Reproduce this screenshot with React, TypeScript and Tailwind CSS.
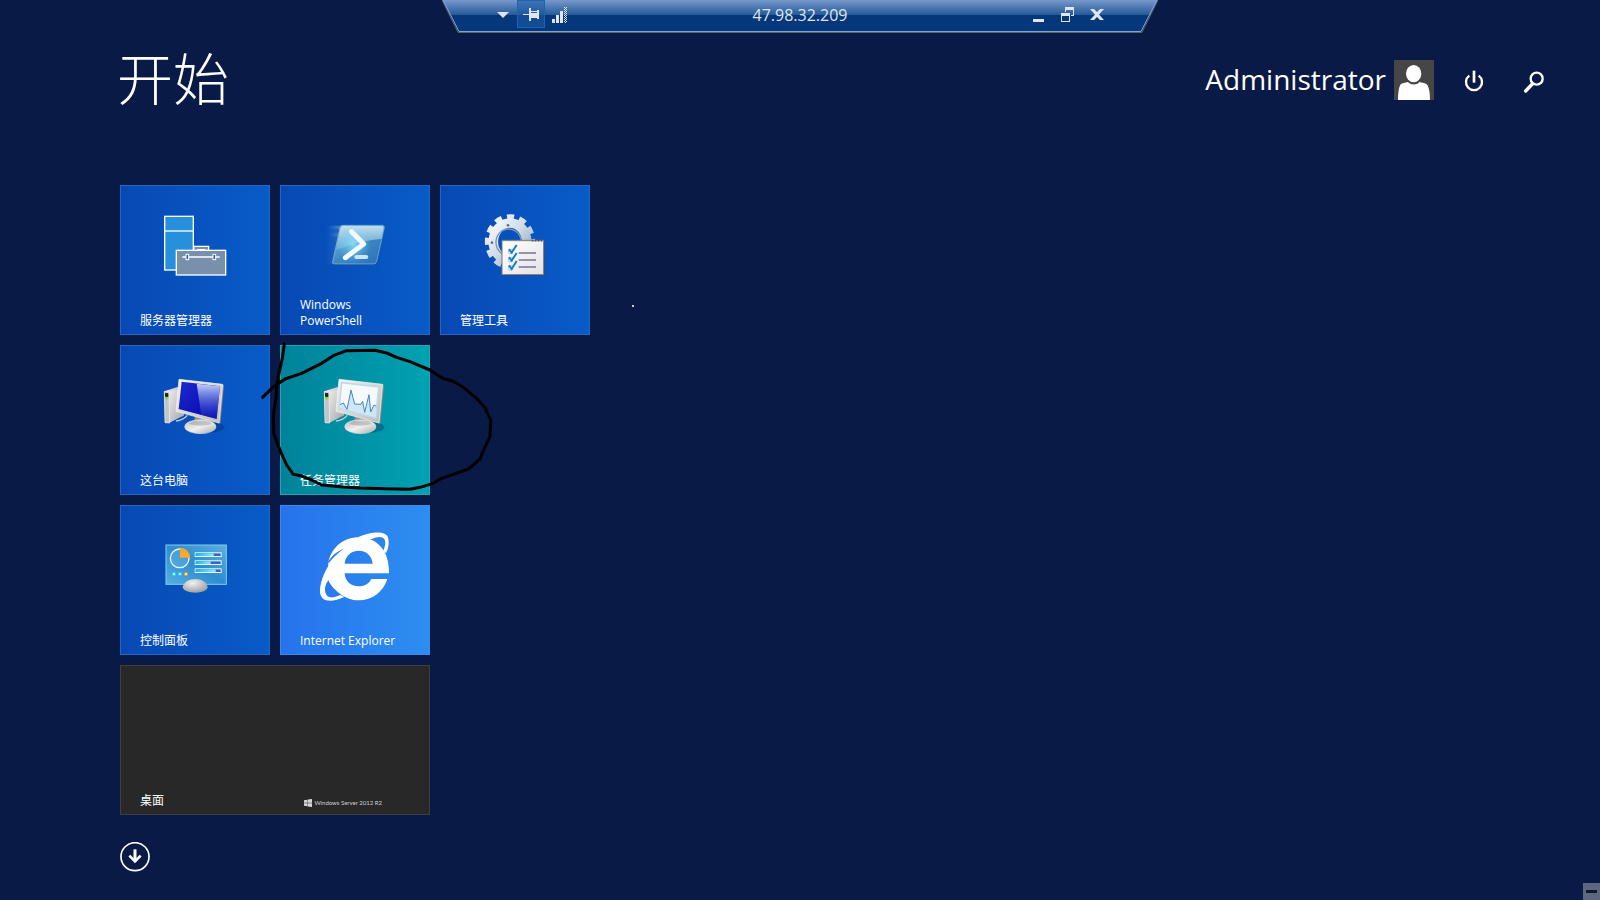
import type { ReactNode } from "react";
import clsx from "clsx";

type TileProps = {
    label: ReactNode;
    color?: string;
    className?: string;
    children?: ReactNode;
};

const BLUE = "bg-linear-to-r from-[#0848b4] to-[#085cc8] outline-[#2466c4]";
const TEAL = "bg-linear-to-r from-[#008299] to-[#00a2b2] outline-[#1fa5b5]";
const SKY = "bg-linear-to-r from-[#2672ec] to-[#2e8ef0] outline-[#3f88ee]";

function Tile({ label, color = BLUE, className, children }: TileProps) {
    return (
        <button
            type="button"
            className={clsx(
                "flex flex-col items-center justify-between pt-5 pb-1.5 text-left text-xs leading-4 outline -outline-offset-1",
                color,
                className
            )}
        >
            {children}
            <span className="w-full px-5">{label}</span>
        </button>
    );
}

function ServerManagerIcon() {
    return (
        <svg viewBox="135 75 240 240" className="size-20" aria-hidden="true">
            <g stroke="#fff" strokeWidth="4">
                <rect x="164" y="109" width="86" height="161" fill="#2790dc" />
                <path d="M164 153H250" />
                <path d="M251 211V199H296V211" fill="#7890ab" />
                <rect x="199" y="211" width="148" height="74" fill="#7890ab" />
                <path d="M217 231H329" />
                <rect x="228" y="223" width="8" height="16" fill="#1d62b4" strokeWidth="3" />
                <rect x="309" y="223" width="8" height="16" fill="#1d62b4" strokeWidth="3" />
            </g>
            <path d="M261 207H286V212H261z" fill="#fff" />
        </svg>
    );
}

function PowerShellIcon() {
    return (
        <svg viewBox="120 75 240 240" className="size-20" aria-hidden="true">
            <defs>
                <linearGradient id="ps-face" x1="0" y1="0" x2="1" y2="1">
                    <stop offset="0" stopColor="#8cc3dc" />
                    <stop offset="0.5" stopColor="#3c8ac4" />
                    <stop offset="1" stopColor="#2a6fb6" />
                </linearGradient>
                <linearGradient id="ps-gloss" x1="0" y1="0" x2="0" y2="1">
                    <stop offset="0" stopColor="#c4e2ee" stopOpacity="0.95" />
                    <stop offset="1" stopColor="#7db9dc" stopOpacity="0.55" />
                </linearGradient>
                <radialGradient id="ps-glow">
                    <stop offset="0" stopColor="#8feaff" stopOpacity="0.8" />
                    <stop offset="1" stopColor="#6fc8f0" stopOpacity="0" />
                </radialGradient>
                <linearGradient id="ps-trail" x1="0" y1="0" x2="1" y2="0">
                    <stop offset="0" stopColor="#7db4e0" stopOpacity="0" />
                    <stop offset="1" stopColor="#8cc0e4" stopOpacity="0.7" />
                </linearGradient>
            </defs>
            <path d="M154 136H202L176 252H150z" fill="url(#ps-trail)" opacity="0.3" />
            <path d="M160 138H202L199 148H160zM160 158H196L193 170H160z" fill="url(#ps-trail)" opacity="0.5" />
            <path d="M203 139H325Q331 139 329 146L307 248Q305 255 298 255H180Q173 255 175 248L196 145Q198 139 203 139z" fill="#073b86" opacity="0.5" />
            <path d="M204 136H322Q329 136 328 143L305 245Q303 252 296 252H178Q171 252 173 245L195 143Q197 136 204 136z" fill="url(#ps-face)" stroke="#8dc0e0" strokeWidth="2" />
            <path d="M205 138H321Q327 138 326 144L319 177C275 180 235 190 183 210L197 144Q199 138 205 138z" fill="url(#ps-gloss)" />
            <ellipse cx="236" cy="194" rx="52" ry="54" fill="url(#ps-glow)" />
            <path d="M230 155L266 192L211 233" fill="none" stroke="#f2faff" strokeWidth="15" strokeLinecap="round" strokeLinejoin="round" />
            <rect x="238" y="225" width="42" height="12" rx="6" fill="#c9e6f6" />
        </svg>
    );
}

function AdminToolsIcon() {
    return (
        <svg viewBox="120 75 240 240" className="size-20" aria-hidden="true">
            <defs>
                <linearGradient id="gear" x1="0" y1="0" x2="1" y2="1">
                    <stop offset="0" stopColor="#f4f7fa" />
                    <stop offset="0.5" stopColor="#cddae6" />
                    <stop offset="1" stopColor="#8fa3ba" />
                </linearGradient>
                <linearGradient id="paper" x1="0" y1="0" x2="1" y2="1">
                    <stop offset="0" stopColor="#ffffff" />
                    <stop offset="1" stopColor="#e2e2e4" />
                </linearGradient>
            </defs>
            <g fill="none" stroke="url(#gear)">
                <ellipse cx="225" cy="185" rx="67" ry="74" strokeWidth="17" pathLength="120" strokeDasharray="5.8 4.2" strokeDashoffset="2.9" />
                <ellipse cx="225" cy="185" rx="50" ry="56" strokeWidth="29" />
            </g>
            <ellipse cx="221" cy="187" rx="38" ry="40" fill="none" stroke="#7d94b0" strokeWidth="4" />
            <circle cx="219" cy="136" r="4" fill="#5f7080" />
            <circle cx="171" cy="188" r="4" fill="#5f7080" />
            <path d="M206 186H329V287H206z" fill="#333" opacity="0.5" />
            <path d="M201 181H326V284H201z" fill="url(#paper)" stroke="#77797c" strokeWidth="3" />
            <path d="M203 182H324" stroke="#85888c" strokeWidth="3" />
            <path d="M290 182H322" stroke="#55585c" strokeWidth="5" strokeDasharray="5 4" />
            <g stroke="#7b6f9c" strokeWidth="4">
                <path d="M251 219H303M251 240H303M251 261H303" />
            </g>
            <g fill="none" stroke="#a5b4c6" strokeWidth="2">
                <path d="M221 208H232V221H221zM221 232H232V245H221zM221 257H232V270H221z" />
            </g>
            <g fill="none" stroke="#147fc0" strokeWidth="6">
                <path d="M222 208L230 218L245 195M222 232L230 242L245 219M222 256L230 267L245 243" />
            </g>
        </svg>
    );
}

function ComputerIcon({ id, children }: { id: string; children: ReactNode }) {
    return (
        <svg viewBox="135 75 240 240" className="size-20" aria-hidden="true">
            <defs>
                <linearGradient id={`${id}-case`} x1="0" y1="0" x2="1" y2="0.3">
                    <stop offset="0" stopColor="#f7f7f7" />
                    <stop offset="1" stopColor="#a9abae" />
                </linearGradient>
                <linearGradient id={`${id}-side`} x1="0" y1="0" x2="1" y2="1">
                    <stop offset="0" stopColor="#ececec" />
                    <stop offset="1" stopColor="#a4a6a9" />
                </linearGradient>
                <linearGradient id={`${id}-frame`} x1="0" y1="0" x2="1" y2="1">
                    <stop offset="0" stopColor="#f5f4ef" />
                    <stop offset="1" stopColor="#bdbcb8" />
                </linearGradient>
                <linearGradient id={`${id}-base`} x1="0" y1="0" x2="1" y2="1">
                    <stop offset="0" stopColor="#bfc0c2" />
                    <stop offset="0.5" stopColor="#f0f0f0" />
                    <stop offset="1" stopColor="#a5a7aa" />
                </linearGradient>
            </defs>
            <ellipse cx="300" cy="262" rx="43" ry="16" fill="#02295e" opacity="0.35" />
            <path d="M198 243Q220 240 232 226" fill="none" stroke="#c8cacd" strokeWidth="4" />
            <path d="M163 154L205 140L222 226L178 248L165 249z" fill={`url(#${id}-case)`} />
            <path d="M177 157L205 147L222 226L181 245z" fill={`url(#${id}-side)`} />
            <path d="M163 154L177 156L179 249L165 248z" fill="#c2c4c6" stroke="#efefef" strokeWidth="2" />
            <path d="M165 159L175 160V171L165 170z" fill="#222" />
            <path d="M165 171L175 172V178L165 177z" fill="#86dc14" />
            <path d="M255 225L300 232L298 252H252z" fill="#909294" />
            <ellipse cx="271" cy="260" rx="47" ry="21" fill={`url(#${id}-base)`} stroke="#d5d6d8" strokeWidth="2" />
            <path d="M236 252Q270 262 306 252L296 244H250z" fill="#8f9194" opacity="0.45" />
            <path d="M335 133L342 136L331 251L323 248z" fill="#8b8b89" />
            <path d="M207 118L338 133L327 249L198 214z" fill={`url(#${id}-frame)`} stroke="#f7f6f2" strokeWidth="2" />
            {children}
        </svg>
    );
}

function ThisPcIcon() {
    return (
        <ComputerIcon id="pc">
            <defs>
                <linearGradient id="pc-screen" x1="0" y1="0" x2="1" y2="1">
                    <stop offset="0" stopColor="#1c2ad0" />
                    <stop offset="1" stopColor="#0504a8" />
                </linearGradient>
                <linearGradient id="pc-shine" x1="0" y1="0" x2="0" y2="1">
                    <stop offset="0" stopColor="#c3d2fa" />
                    <stop offset="1" stopColor="#2440d0" stopOpacity="0.2" />
                </linearGradient>
            </defs>
            <path d="M215 125L330 139L320 237L206 207z" fill="url(#pc-screen)" />
            <path d="M260 131L330 139L320 237L274 224z" fill="url(#pc-shine)" />
        </ComputerIcon>
    );
}

function TaskManagerIcon() {
    return (
        <ComputerIcon id="tm">
            <path d="M215 128L326 141L317 233L207 205z" fill="#f6fafd" stroke="#bcdcef" strokeWidth="5" />
            <path d="M210 194L220 189L231 208L243 150L254 192L273 193L278 184L284 217L297 164L302 216L312 195L319 199L316 230L208 202z" fill="#cfe6f5" />
            <path
                d="M210 194L220 189L231 208L243 150L254 192L273 193L278 184L284 217L297 164L302 216L312 195L319 199"
                fill="none"
                stroke="#4289c0"
                strokeWidth="3"
                strokeLinejoin="round"
            />
        </ComputerIcon>
    );
}

function ControlPanelIcon() {
    return (
        <svg viewBox="135 75 240 240" className="size-20" aria-hidden="true">
            <defs>
                <linearGradient id="cp-panel" x1="0" y1="1" x2="1" y2="0">
                    <stop offset="0" stopColor="#56b0e4" />
                    <stop offset="0.5" stopColor="#2f8ccf" />
                    <stop offset="1" stopColor="#5cb2da" />
                </linearGradient>
                <linearGradient id="cp-bar" x1="0" y1="0" x2="1" y2="0">
                    <stop offset="0" stopColor="#16b4f0" />
                    <stop offset="1" stopColor="#8eecff" />
                </linearGradient>
                <radialGradient id="cp-base" cx="0.4" cy="0.3" r="0.7">
                    <stop offset="0" stopColor="#f2f2f2" />
                    <stop offset="1" stopColor="#9fa0a2" />
                </radialGradient>
            </defs>
            <rect x="168" y="135" width="181" height="118" fill="url(#cp-panel)" stroke="#7fcdf0" strokeWidth="3" />
            <circle cx="209" cy="175" r="28" fill="#5db4e4" fillOpacity="0.5" stroke="#e8f6fd" strokeWidth="4" />
            <path d="M210 173V143A30 30 0 0 1 240 173z" fill="#ffa726" />
            {[164, 188, 212].map((y, i) => (
                <g key={y}>
                    <rect x="254" y={y - 7} width="81" height="14" rx="1" fill="#e2f6fd" />
                    <rect x="257" y={y - 4} width="75" height="8" fill="#3d62c4" />
                    <rect x="257" y={y - 4} width={[54, 45, 60][i]} height="8" fill="url(#cp-bar)" />
                </g>
            ))}
            <circle cx="192" cy="222" r="5" fill="#9af4ff" stroke="#35cdf4" strokeWidth="3" />
            <circle cx="210" cy="222" r="5" fill="#9af4ff" stroke="#35cdf4" strokeWidth="3" />
            <circle cx="228" cy="222" r="5" fill="#ffe9b0" stroke="#f59a20" strokeWidth="3" />
            <path d="M218 262C222 245 236 237 256 237C276 237 290 246 293 262C290 273 276 278 256 278C236 278 221 273 218 262z" fill="url(#cp-base)" />
        </svg>
    );
}

function InternetExplorerIcon() {
    return (
        <svg viewBox="120 75 240 240" className="size-20" aria-hidden="true">
            <g fill="#fff">
                <path
                    fillRule="evenodd"
                    d="M342 220H209C210 243 227 259 251 259C269 259 283 250 289 237H337C325 275 292 301 251 301C230 301 210 293 195 281C176 267 162 250 159 236L160 186C170 142 205 112 252 112C306 112 344 153 342 220zM209 191H293C291 168 275 152 251 152C228 152 211 168 209 191z"
                />
                <path d="M207 147C168 172 135 232 135 274C135 307 170 309 208 291L195 285C166 300 150 291 150 268C150 256 155 246 163 238z" />
                <path d="M248 112C290 93 336 92 340 116C343 131 340 145 333 160L325 152C333 134 333 119 324 113C315 108 300 112 284 119z" />
            </g>
            <path d="M158 189C167 170 184 156 208 145C191 158 175 172 162 188z" fill="#297ced" />
        </svg>
    );
}

function WindowsLogo() {
    return (
        <svg viewBox="0 0 8 8" className="size-2" fill="#d6d6d6" aria-hidden="true">
            <path d="M0 1.2L3.4 .7V3.8H0zM3.8 .6L8 0V3.8H3.8zM0 4.2H3.4V7.3L0 6.8zM3.8 4.2H8V8L3.8 7.4z" />
        </svg>
    );
}

function ConnectionBar() {
    return (
        <div className="relative mx-auto h-[33px] w-[716px]">
            <svg viewBox="0 0 716 33" className="absolute inset-0 size-full" aria-hidden="true">
                <defs>
                    <linearGradient id="bar" x1="0" y1="0" x2="0" y2="33" gradientUnits="userSpaceOnUse">
                        <stop offset="0" stopColor="#7799cb" />
                        <stop offset="0.45" stopColor="#255a98" />
                        <stop offset="0.45" stopColor="#06377a" />
                        <stop offset="1" stopColor="#06377a" />
                    </linearGradient>
                </defs>
                <path d="M0 0H716L700 32H16z" fill="url(#bar)" />
                <path d="M0 0L16 32.5H700L716 0" fill="none" stroke="#5a5f68" />
                <path d="M1 0L17 31.5H699L715 0" fill="none" stroke="#7fa3d2" />
            </svg>
            <div className="relative flex h-[30px] items-center pr-[54px] pl-[46px] text-[#dfe5ef]">
                <button type="button" aria-label="菜单" className="flex h-7 w-[29px] items-center justify-center">
                    <svg viewBox="0 0 12 6" className="h-1.5 w-3" fill="currentColor" aria-hidden="true">
                        <path d="M0 0H12L6 6z" />
                    </svg>
                </button>
                <button type="button" aria-label="固定" className="flex h-7 w-7 items-center justify-center self-start border border-[#1b66b4] bg-[#1a5ba4]/60">
                    <svg viewBox="0 0 16 14" className="h-3.5 w-4" fill="currentColor" aria-hidden="true">
                        <path d="M0 7H6V1H8V4H14V3H16V12H14V11H8V14H6V8H0zM8 5V6H14V5z" fillRule="evenodd" />
                    </svg>
                </button>
                <svg viewBox="0 0 16 16" className="ml-[7px] size-4" fill="currentColor" aria-hidden="true">
                    <path d="M0 12H3V16H0zM4 8H7V16H4zM8 4H11V16H8z" />
                    <path d="M12.5 0V16M14.5 0V16" stroke="currentColor" strokeDasharray="1 1" />
                    <path d="M13.5 1V16" stroke="currentColor" strokeDasharray="1 1" />
                </svg>
                <span className="flex-1 text-center text-base">47.98.32.209</span>
                <div className="flex items-center gap-[15px]">
                    <button type="button" aria-label="最小化">
                        <svg viewBox="0 0 14 16" className="h-4 w-3.5" fill="currentColor" aria-hidden="true">
                            <path d="M1 12H12V15H1z" />
                        </svg>
                    </button>
                    <button type="button" aria-label="还原">
                        <svg viewBox="0 0 14 16" className="h-4 w-3.5" fill="currentColor" aria-hidden="true">
                            <path d="M4 0H13V9H10V8H12V3H5V5H4zM0 6H9V15H0zM1 9V14H8V9z" fillRule="evenodd" />
                        </svg>
                    </button>
                    <button type="button" aria-label="关闭">
                        <svg viewBox="0 0 14 16" className="h-4 w-3.5" fill="currentColor" aria-hidden="true">
                            <path d="M0 2H4L7 5L10 2H14L9 7.5L14 13H10L7 10L4 13H0L5 7.5z" />
                        </svg>
                    </button>
                </div>
            </div>
        </div>
    );
}

function Header() {
    return (
        <header className="flex h-[94px] items-center justify-between pr-14 pl-[117px]">
            <h1 className="pb-1 text-[56px] leading-none font-light">开始</h1>
            <div className="flex items-center">
                <button type="button" className="flex items-center gap-2 text-[28px] leading-10">
                    <span className="pb-0.5">Administrator</span>
                    <svg viewBox="0 0 120 120" className="size-10" aria-hidden="true">
                        <path d="M0 0H120V120H0z" fill="#464646" />
                        <path
                            d="M12 120C12 100 14 84 19 74C24 68 34 69 42 66C48 75 68 77 76 66C84 69 95 68 100 75C106 85 108 100 108 120z"
                            fill="#fff"
                        />
                        <ellipse cx="59" cy="41" rx="23" ry="26" fill="#fff" />
                    </svg>
                </button>
                <button type="button" aria-label="电源" className="ml-[30px] pt-0.5">
                    <svg viewBox="0 0 60 66" className="h-[22px] w-5" fill="none" stroke="#fff" strokeWidth="7" aria-hidden="true">
                        <path d="M16 17A24 24 0 1 0 44 17" />
                        <path d="M30 2V38" strokeWidth="8" />
                    </svg>
                </button>
                <button type="button" aria-label="搜索" className="ml-10 pt-1">
                    <svg viewBox="0 0 60 66" className="h-[22px] w-5" fill="none" stroke="#fff" aria-hidden="true">
                        <circle cx="38" cy="23" r="18" strokeWidth="7" />
                        <path d="M25 39L5 60" strokeWidth="10" strokeLinecap="round" />
                    </svg>
                </button>
            </div>
        </header>
    );
}

// Freehand mark drawn around the task manager tile
function Scribble() {
    return (
        <svg viewBox="0 0 780 510" className="pointer-events-none absolute top-[150px] left-[130px] h-[170px] w-[260px]" aria-hidden="true">
            <path
                d="M103 27L97 70L88 110L80 150L78 190L70 240L71 295L92 350L110 390L130 418L152 422L185 435L215 450L280 456L330 459L405 461L480 463L510 457L550 445L575 430L625 413L655 402L690 372L703 340L720 305L722 255L706 220L680 190L640 157L608 138L578 130L540 105L480 80L440 67L410 54L375 46L290 47L250 62L215 85L155 115L105 132L65 160L38 187"
                fill="none"
                stroke="#000"
                strokeWidth="9"
                strokeLinecap="round"
                strokeLinejoin="round"
            />
        </svg>
    );
}

export default function App() {
    return (
        <div lang="zh-CN" className="relative min-h-screen overflow-hidden bg-[#081a45] font-['Open_Sans','Noto_Sans_CJK_SC',sans-serif] text-white">
            <ConnectionBar />
            <Header />

            <main className="mt-[58px] px-[120px]">
                <div className="relative grid w-fit auto-rows-[150px] grid-cols-[repeat(3,150px)] gap-2.5">
                    <Tile label="服务器管理器">
                        <ServerManagerIcon />
                    </Tile>
                    <Tile label={<>Windows<br />PowerShell</>}>
                        <PowerShellIcon />
                    </Tile>
                    <Tile label="管理工具">
                        <AdminToolsIcon />
                    </Tile>
                    <Tile label="这台电脑" className="col-start-1">
                        <ThisPcIcon />
                    </Tile>
                    <Tile label="任务管理器" color={TEAL}>
                        <TaskManagerIcon />
                    </Tile>
                    <Tile label="控制面板" className="col-start-1">
                        <ControlPanelIcon />
                    </Tile>
                    <Tile label="Internet Explorer" color={SKY}>
                        <InternetExplorerIcon />
                    </Tile>
                    <button
                        type="button"
                        className="col-span-2 col-start-1 flex items-end justify-between bg-[#282828] pr-12 pb-1.5 pl-5 text-xs leading-4 outline -outline-offset-1 outline-[#3f3f3f]"
                    >
                        桌面
                        <span className="flex items-center gap-0.5 font-['Lato',sans-serif] text-[6px] leading-3 text-[#d0d0d0]">
                            <WindowsLogo />
                            Windows Server 2012 R2
                        </span>
                    </button>
                    <Scribble />
                    <span className="absolute top-[120px] left-[512px] size-0.5 bg-[#c8ccd6]" />
                </div>

                <button type="button" aria-label="所有应用" className="mt-[27px] block">
                    <svg viewBox="0 0 90 90" className="size-[30px]" fill="none" stroke="#fff" aria-hidden="true">
                        <circle cx="45" cy="44" r="42" strokeWidth="5" />
                        <path d="M45 22V58" strokeWidth="9" />
                        <path d="M28 41L45 58L62 41" strokeWidth="8" />
                    </svg>
                </button>
            </main>

            <button type="button" aria-label="缩小" className="absolute right-0 bottom-0 flex size-[17px] items-center justify-center bg-[#5d6880]">
                <span className="h-[3px] w-[11px] bg-[#10182c]" />
            </button>
        </div>
    );
}
